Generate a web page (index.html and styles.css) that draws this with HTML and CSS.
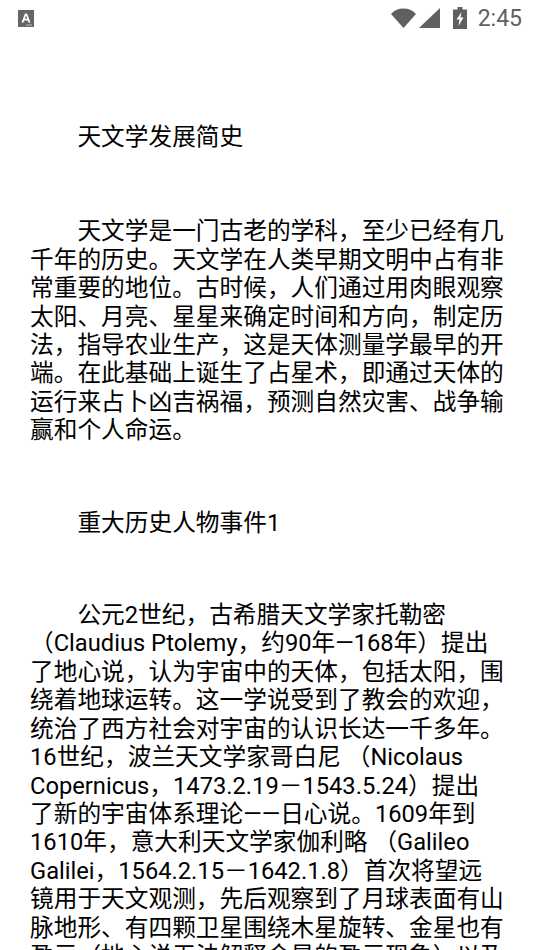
FILE: index.html
```html
<!DOCTYPE html>
<html lang="zh-CN">
<head>
  <meta charset="UTF-8">
  <title>天文学发展简史</title>
  <link rel="stylesheet" href="styles.css">
</head>
<body>

<header class="status-bar">
  <svg class="app-icon" width="16" height="17" viewBox="0 0 16 17">
    <rect width="16" height="17" fill="#666"/>
    <path d="M3.500 12.500 7 3.500h2l3.500 9h-2l-.7-2H6.200l-.7 2zM6.800 8.800h2.400L8 5.500z" fill="#fff"/>
    <rect x="8.500" y="14.500" width="1.200" height="1.200" fill="#ddd"/>
    <rect x="10.500" y="14.500" width="1.200" height="1.200" fill="#ddd"/>
    <rect x="12.500" y="14.500" width="1.200" height="1.200" fill="#ddd"/>
  </svg>
  <div class="status-right">
    <svg width="25" height="20" viewBox="0 0 25 20">
      <path d="M0 6C3.500 2.200 7.500 .5 12.500 .5S21.500 2.200 25 6L12.500 20z" fill="#606060"/>
    </svg>
    <svg class="signal" width="21" height="20" viewBox="0 0 21 20">
      <path d="M0 20 21 0v20z" fill="#606060"/>
    </svg>
    <svg class="battery" width="14" height="22" viewBox="0 0 14 22">
      <path d="M4.500 0h5v2.500H14V22H0V2.500h4.500z" fill="#606060"/>
      <path d="M8.500 5 3.500 12.500h3L5.500 19l5-8.500h-3z" fill="#fff"/>
    </svg>
    <span class="clock">2:45</span>
  </div>
</header>

<main class="article">
  <p class="title">天文学发展简史</p>
  <p class="para">天文学是一门古老的学科，至少已经有几千年的历史。天文学在人类早期文明中占有非常重要的地位。古时候，人们通过用肉眼观察太阳、月亮、星星来确定时间和方向，制定历法，指导农业生产，这是天体测量学最早的开端。在此基础上诞生了占星术，即通过天体的运行来占卜凶吉祸福，预测自然灾害、战争输赢和个人命运。</p>
  <p class="heading">重大历史人物事件1</p>
  <p class="para">公元2世纪，古希腊天文学家托勒密<br>（Claudius Ptolemy，约90年—168年）提出<br>了地心说，认为宇宙中的天体，包括太阳，围<br>绕着地球运转。这一学说受到了教会的欢迎，<br>统治了西方社会对宇宙的认识长达一千多年。<br>16世纪，波兰天文学家哥白尼 （Nicolaus<br>Copernicus，1473.2.19－1543.5.24）提出<br>了新的宇宙体系理论——日心说。1609年到<br>1610年，意大利天文学家伽利略 （Galileo<br>Galilei，1564.2.15－1642.1.8）首次将望远<br>镜用于天文观测，先后观察到了月球表面有山<br>脉地形、有四颗卫星围绕木星旋转、金星也有<br>盈亏（地心说无法解释金星的盈亏现象）以及</p>
</main>

</body>
</html>
```

FILE: styles.css
```css
html, body {
  margin: 0;
  height: 950px;
  overflow: hidden;
  background-color: #fff;
}

body {
  font-family: Roboto, "Noto Sans CJK SC", sans-serif;
  color: #000;
}

.status-bar {
  height: 36px;
  padding: 0 12px 0 18px;
  display: flex;
  align-items: center;
  justify-content: space-between;
}

.status-right {
  display: flex;
  align-items: center;
}

.signal {
  margin-left: 3px;
}

.battery {
  margin-left: 13px;
}

.clock {
  margin-left: 11px;
  font-size: 23px;
  color: #606060;
}

.article {
  padding: 87px 30px 0;
  font-size: 23.7px;
  line-height: 28.4px;
}

.article p {
  margin: 0;
  text-indent: 2em;
}

.article .title {
  margin-bottom: 66px;
}

.article .heading {
  margin: 64px 0 64px;
}
```
